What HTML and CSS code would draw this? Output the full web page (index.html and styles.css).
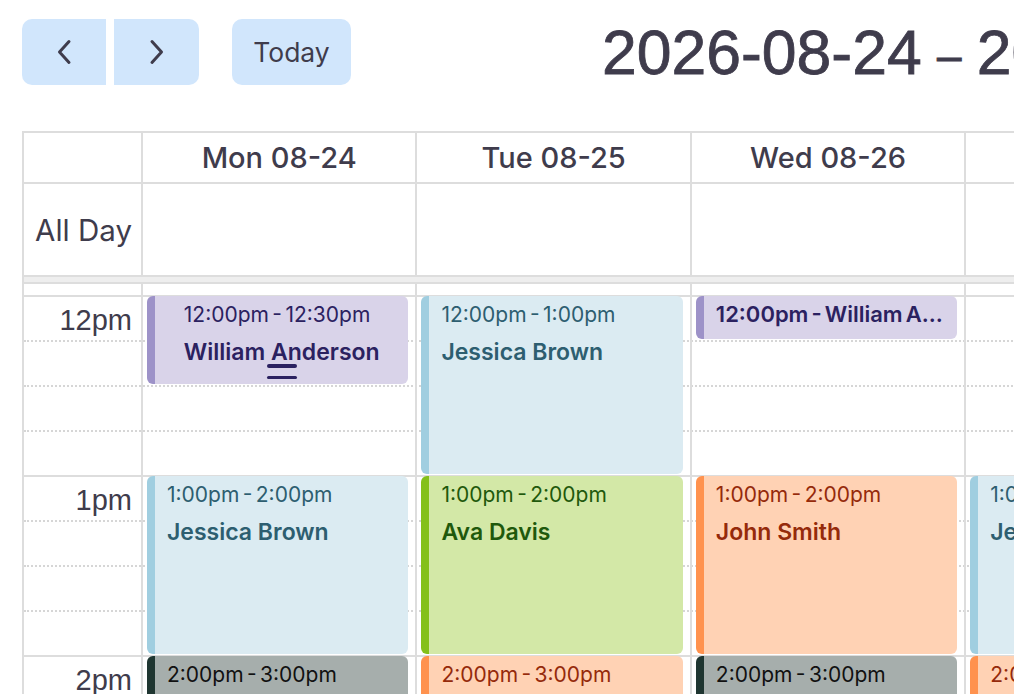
FILE: index.html
```html
<!DOCTYPE html>
<html lang="en">
<head>
<meta charset="utf-8">
<title>Week calendar</title>
<link rel="stylesheet" href="styles.css">
</head>
<body>
<div class="page">
  <div class="toolbar">
    <div class="nav-group">
      <button class="btn btn-prev" aria-label="Previous week">
        <svg class="chev" width="16" height="26" viewBox="0 0 16 26"><path d="M13 2.5 L3.5 13 L13 23.5"/></svg>
      </button>
      <button class="btn btn-next" aria-label="Next week">
        <svg class="chev" width="16" height="26" viewBox="0 0 16 26"><path d="M3 2.5 L12.5 13 L3 23.5"/></svg>
      </button>
    </div>
    <button class="btn btn-today">Today</button>
    <h2 class="title">2026-08-24<span class="sep"> – </span>2026-08-30</h2>
  </div>

  <div class="cal">
    <div class="row head">
      <div class="cell axis"></div>
      <div class="cell day-head">Mon 08-24</div>
      <div class="cell day-head">Tue 08-25</div>
      <div class="cell day-head">Wed 08-26</div>
      <div class="cell day-head">Thu 08-27</div>
      <div class="cell day-head">Fri 08-28</div>
      <div class="cell day-head">Sat 08-29</div>
      <div class="cell day-head">Sun 08-30</div>
    </div>
    <div class="row allday">
      <div class="cell axis allday-label">All Day</div>
      <div class="cell"></div>
      <div class="cell"></div>
      <div class="cell"></div>
      <div class="cell"></div>
      <div class="cell"></div>
      <div class="cell"></div>
      <div class="cell"></div>
    </div>
    <div class="divider"></div>

    <div class="tg-body">
      <div class="slots">
        <div class="slot partial"></div>
        <div class="slot hour"><div class="slot-label">12pm</div></div>
        <div class="slot"><div class="slot-label"></div></div>
        <div class="slot"><div class="slot-label"></div></div>
        <div class="slot"><div class="slot-label"></div></div>
        <div class="slot hour"><div class="slot-label">1pm</div></div>
        <div class="slot"><div class="slot-label"></div></div>
        <div class="slot"><div class="slot-label"></div></div>
        <div class="slot"><div class="slot-label"></div></div>
        <div class="slot hour"><div class="slot-label">2pm</div></div>
        <div class="slot"><div class="slot-label"></div></div>
      </div>

      <div class="cols">
        <div class="col axis-col"></div>

        <div class="col">
          <div class="event ev-purple ev-centered" style="top:12px;height:88px">
            <div class="ev-stack">
              <div class="ev-time">12:00pm - 12:30pm</div>
              <div class="ev-title">William Anderson</div>
            </div>
            <span class="ev-resizer"></span>
          </div>
          <div class="event ev-blue" style="top:192px;height:178px">
            <div class="ev-time">1:00pm - 2:00pm</div>
            <div class="ev-title">Jessica Brown</div>
          </div>
          <div class="event ev-gray" style="top:372px;height:178px">
            <div class="ev-time">2:00pm - 3:00pm</div>
            <div class="ev-title">Michael Johnson</div>
          </div>
        </div>

        <div class="col">
          <div class="event ev-blue" style="top:12px;height:178px">
            <div class="ev-time">12:00pm - 1:00pm</div>
            <div class="ev-title">Jessica Brown</div>
          </div>
          <div class="event ev-green" style="top:192px;height:178px">
            <div class="ev-time">1:00pm - 2:00pm</div>
            <div class="ev-title">Ava Davis</div>
          </div>
          <div class="event ev-orange" style="top:372px;height:178px">
            <div class="ev-time">2:00pm - 3:00pm</div>
            <div class="ev-title">John Smith</div>
          </div>
        </div>

        <div class="col">
          <div class="event ev-purple ev-compact" style="top:12px;height:43px">
            <div class="ev-line">12:00pm - William Anderson</div>
          </div>
          <div class="event ev-orange" style="top:192px;height:178px">
            <div class="ev-time">1:00pm - 2:00pm</div>
            <div class="ev-title">John Smith</div>
          </div>
          <div class="event ev-gray" style="top:372px;height:178px">
            <div class="ev-time">2:00pm - 3:00pm</div>
            <div class="ev-title">Michael Johnson</div>
          </div>
        </div>

        <div class="col">
          <div class="event ev-blue" style="top:192px;height:178px">
            <div class="ev-time">1:00pm - 2:00pm</div>
            <div class="ev-title">Jessica Brown</div>
          </div>
          <div class="event ev-orange" style="top:372px;height:178px">
            <div class="ev-time">2:00pm - 3:00pm</div>
            <div class="ev-title">John Smith</div>
          </div>
        </div>

        <div class="col"></div>
        <div class="col"></div>
        <div class="col"></div>
      </div>
    </div>
  </div>
</div>
</body>
</html>
```

FILE: styles.css
```css
html, body {
  margin: 0;
  padding: 0;
  background: #ffffff;
  overflow: hidden;
}

body {
  font-family: "Inter", "Noto Sans", sans-serif;
  color: #3f3c4c;
}

.page {
  width: 2042px;
  padding: 19px 22px 0;
}

/* ---------- toolbar ---------- */
.toolbar {
  display: flex;
  align-items: center;
  height: 66px;
}

.nav-group {
  display: flex;
  gap: 8px;
}

.btn {
  border: 0;
  padding: 0;
  margin: 0;
  height: 66px;
  background: #d1e6fc;
  color: #3f3c4c;
  display: flex;
  align-items: center;
  justify-content: center;
  font-family: "Inter", "Noto Sans", sans-serif;
}

.btn-prev {
  width: 84px;
  border-radius: 10px 0 0 10px;
}

.btn-next {
  width: 85px;
  border-radius: 0 10px 10px 0;
}

.chev path {
  fill: none;
  stroke: #3f3c4c;
  stroke-width: 3;
  stroke-linecap: round;
  stroke-linejoin: round;
}

.btn-today {
  width: 119px;
  margin-left: 33px;
  border-radius: 10px;
  font-size: 26.5px;
}

.title {
  margin: 0 0 0 251px;
  font-family: "Liberation Sans", Arial, sans-serif;
  font-size: 62.5px;
  font-weight: 400;
  line-height: 1;
  white-space: nowrap;
  color: #3f3c4c;
  -webkit-text-stroke: 0.8px #3f3c4c;
}

.title .sep {
  font-size: 44px;
  word-spacing: 3px;
  vertical-align: 3px;
}

/* ---------- calendar grid ---------- */
.cal {
  margin-top: 46px;
  width: 2042px;
  box-sizing: border-box;
  border-top: 2px solid #dddddd;
  border-left: 2px solid #dddddd;
}

.row {
  display: grid;
  grid-template-columns: 119px repeat(7, 1fr);
}

.cell {
  box-sizing: border-box;
  border-right: 2px solid #dddddd;
  border-bottom: 2px solid #dddddd;
}

.head .cell {
  height: 51px;
}

.day-head {
  display: flex;
  align-items: center;
  justify-content: center;
  font-size: 29px;
  font-weight: 500;
}

.allday .cell {
  height: 93px;
}

.allday-label {
  display: flex;
  align-items: center;
  justify-content: flex-end;
  padding-right: 9px;
  font-size: 29.5px;
}

.divider {
  height: 5px;
  background: #eeeeee;
  border-bottom: 2px solid #dddddd;
}

.tg-body {
  position: relative;
  height: 420px;
  overflow: hidden;
}

.slot {
  box-sizing: border-box;
  height: 45px;
  border-top: 2px dotted #d6d6d6;
  display: grid;
  grid-template-columns: 119px 1fr;
}

.slot.hour {
  border-top: 2px solid #dddddd;
}

.slot.partial {
  height: 11px;
  border-top: 0;
}

.slot-label {
  font-family: "Liberation Sans", Arial, sans-serif;
  font-size: 29px;
  line-height: 1.15;
  text-align: right;
  padding: 7px 11px 0 0;
  color: #3f3c4c;
}

.cols {
  position: absolute;
  inset: 0;
  display: grid;
  grid-template-columns: 119px repeat(7, 1fr);
}

.col {
  position: relative;
  border-right: 2px solid #dddddd;
}

/* ---------- events ---------- */
.event {
  position: absolute;
  left: 4px;
  right: 7px;
  box-sizing: border-box;
  border-left: 8px solid;
  border-radius: 6px;
  padding: 5px 12px 3px;
  overflow: hidden;
}

.ev-time {
  font-size: 21px;
  line-height: 28px;
  word-spacing: -2.5px;
  white-space: nowrap;
}

.ev-title {
  font-size: 23px;
  line-height: 28px;
  font-weight: 600;
  margin-top: 9px;
  white-space: nowrap;
}

.ev-centered {
  display: flex;
  justify-content: center;
  padding-top: 5px;
}

.ev-resizer {
  position: absolute;
  left: 50%;
  bottom: 5px;
  width: 30px;
  height: 15px;
  transform: translateX(-50%);
}

.ev-resizer::before,
.ev-resizer::after {
  content: "";
  position: absolute;
  left: 0;
  right: 0;
  height: 3.5px;
  border-radius: 2px;
  background: currentColor;
}

.ev-resizer::before { top: 0; }
.ev-resizer::after { bottom: 0; }

.ev-compact {
  padding-top: 4px;
}

.ev-compact .ev-line {
  font-size: 22px;
  line-height: 28px;
  font-weight: 600;
  word-spacing: -2.5px;
  white-space: nowrap;
  overflow: hidden;
  text-overflow: ellipsis;
}

.ev-purple {
  background: #d9d3e9;
  border-left-color: #9d92c8;
  color: #2b2160;
}

.ev-blue {
  background: #dbebf2;
  border-left-color: #a0cee0;
  color: #2d5e70;
}

.ev-green {
  background: #d3e8a7;
  border-left-color: #84c01a;
  color: #1f590c;
}

.ev-orange {
  background: #ffd2b4;
  border-left-color: #ff924e;
  color: #952a0b;
}

.ev-gray {
  background: #a6aeac;
  border-left-color: #1f3631;
  color: #111111;
}
```
